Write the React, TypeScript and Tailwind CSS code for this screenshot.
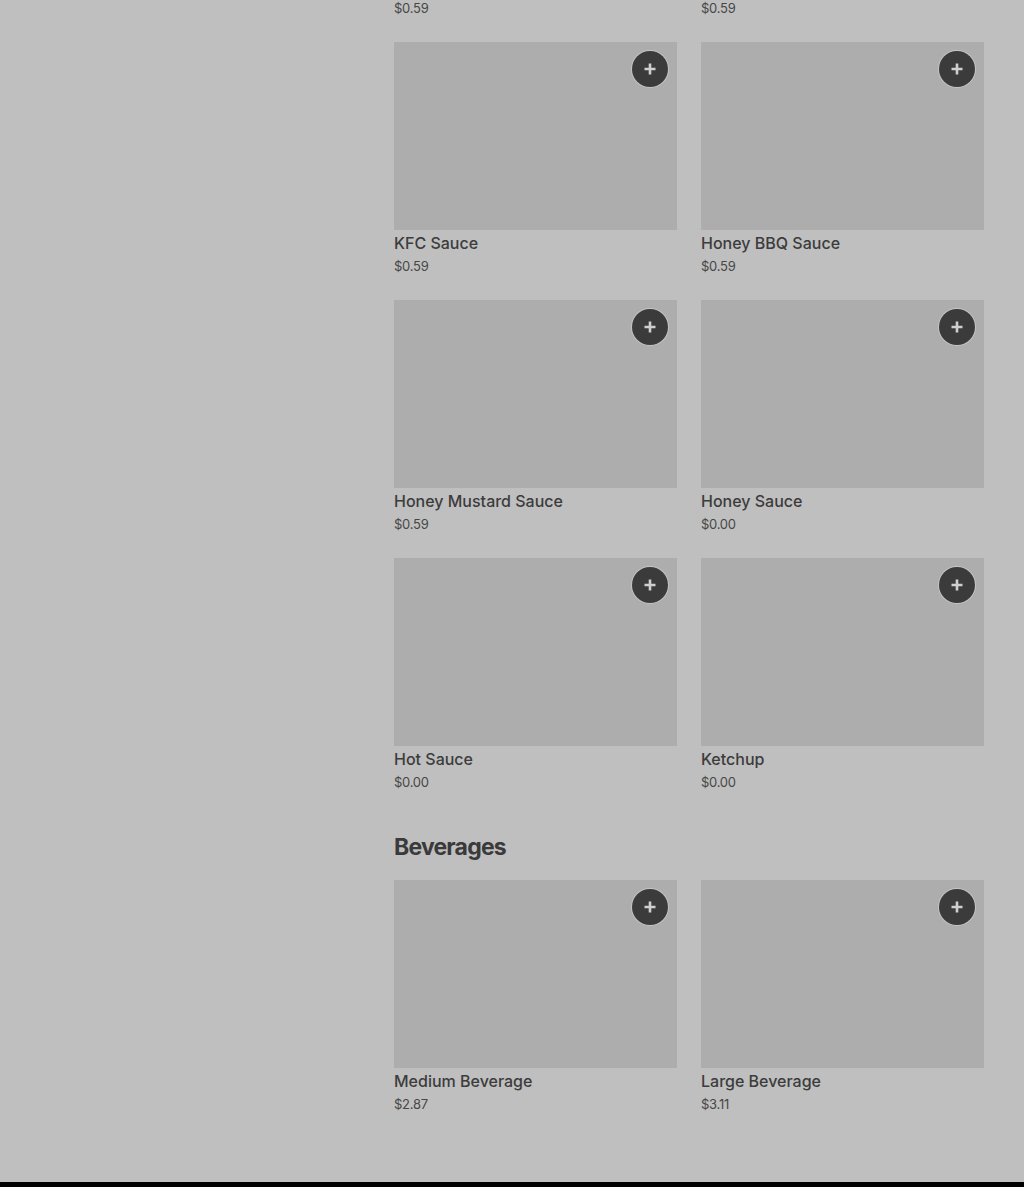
import React from "react";

type Item = { name: string; price: string };

const sauces: Item[] = [
  { name: "Gravy", price: "$0.59" },
  { name: "Buttermilk Ranch", price: "$0.59" },
  { name: "KFC Sauce", price: "$0.59" },
  { name: "Honey BBQ Sauce", price: "$0.59" },
  { name: "Honey Mustard Sauce", price: "$0.59" },
  { name: "Honey Sauce", price: "$0.00" },
  { name: "Hot Sauce", price: "$0.00" },
  { name: "Ketchup", price: "$0.00" },
];

const beverages: Item[] = [
  { name: "Medium Beverage", price: "$2.87" },
  { name: "Large Beverage", price: "$3.11" },
];

function PlusButton() {
  return (
    <button className="absolute right-[9px] top-[9px] flex h-[36px] w-[36px] items-center justify-center rounded-full bg-[#3b3b3b] shadow-[0_0_0_1px_rgba(205,205,205,0.7)]">
      <svg width="14" height="14" viewBox="0 0 14 14">
        <path d="M7 1.5v11M1.5 7h11" stroke="#cfcfcf" strokeWidth="2.6" strokeLinecap="butt" />
      </svg>
    </button>
  );
}

function Card({ item }: { item: Item }) {
  return (
    <div className="flex flex-col">
      <div className="relative h-[188px] bg-[#adadad]">
        <PlusButton />
      </div>
      <div className="mt-[3px] text-[16px] leading-[20px] font-medium text-[#3c3c3c]">{item.name}</div>
      <div className="mt-[3px] text-[13px] leading-[20px] tracking-[-0.02em] text-[#474747]">{item.price}</div>
    </div>
  );
}

export default function App() {
  return (
    <div
      className="flex h-[1187px] w-[1024px] flex-col overflow-hidden bg-[#bfbfbf]"
      style={{ fontFamily: "Inter, 'Noto Sans', 'Liberation Sans', sans-serif" }}
    >
      <div className="flex flex-1">
        <div className="w-[394px] shrink-0" />
        <div className="w-[590px] shrink-0">
          <div className="mt-[-216px] grid grid-cols-2 gap-x-[24px] gap-y-[24px]">
            {sauces.map((s) => (
              <Card key={s.name} item={s} />
            ))}
          </div>
          <h2 className="mt-[39px] text-[23px] leading-[32px] font-bold tracking-[-0.035em] text-[#3a3a3a]">
            Beverages
          </h2>
          <div className="mt-[17px] grid grid-cols-2 gap-x-[24px] gap-y-[24px]">
            {beverages.map((s) => (
              <Card key={s.name} item={s} />
            ))}
          </div>
        </div>
      </div>
      <div className="h-[5px] shrink-0 bg-black" />
    </div>
  );
}
